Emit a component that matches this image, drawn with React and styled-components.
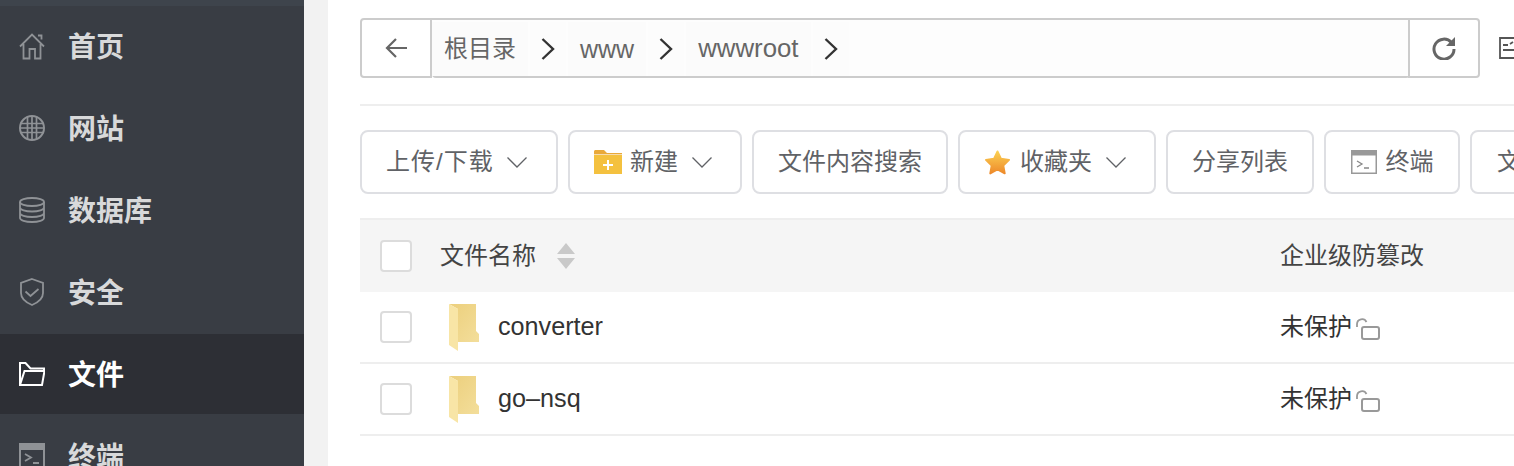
import React from "react";
import styled, { createGlobalStyle } from "styled-components";

const Global = createGlobalStyle`
  html, body { margin: 0; padding: 0; background: #fff; }
  body { font-family: "Liberation Sans", "Noto Sans CJK SC", sans-serif; }
  * { box-sizing: border-box; }
`;
const Page = styled.div`display: flex; width: 1514px; height: 466px; overflow: hidden; background: #fff;`;
const Sidebar = styled.nav`
  flex: 0 0 304px; background: #393d44; padding-top: 6px;
  display: flex; flex-direction: column; gap: 2px; overflow: hidden;
  box-shadow: inset 0 6px 0 #3e444c;
`;
const NavItem = styled.div`
  flex: 0 0 80px; display: flex; align-items: center; padding-left: 19px; gap: 23px;
  background: ${p => (p.$active ? "#2d2f35" : "transparent")};
  color: ${p => (p.$active ? "#fff" : "#d8d9da")};
  font-size: 28px; font-weight: 700;
  font-family: "Noto Sans CJK SC", sans-serif; line-height: 40px;
  & > svg { flex: 0 0 26px; }
  & > span { position: relative; top: -1px; }
`;
const Gutter = styled.div`flex: 0 0 24px; background: #f2f2f2;`;
const Main = styled.main`flex: 0 0 1186px; padding: 18px 0 0 32px; overflow: hidden;`;
const PathRow = styled.div`display: flex; align-items: center; width: 1200px; height: 60px;`;
const PathBox = styled.div`display: flex; flex: 0 0 1120px; height: 60px;`;
const SquareBtn = styled.div`
  flex: 0 0 72px; display: flex; align-items: center; justify-content: center;
  border: 2px solid #ccc; background: #fff;
  border-radius: ${p => (p.$left ? "4px 0 0 4px" : "0 4px 4px 0")};
  ${p => (p.$left ? "" : "margin-left: -2px;")}
`;
const Crumbs = styled.div`
  flex: 1; display: flex; align-items: stretch; height: 60px; background: #fdfdfd;
  border-top: 2px solid #ccc; border-bottom: 2px solid #ccc; border-radius: 0 0 4px 4px;
  padding: 2px 0 0; color: #666; font-size: 24px; line-height: 1;
`;
const Crumb = styled.span`
  display: flex; align-items: center; padding: 0 12px; background: #fbfbfb;
  font-size: ${p => p.$size || 24}px; margin-right: 2px;
`;
const Sep = styled.span`
  display: flex; align-items: center; justify-content: center; width: 36px; background: #fcfcfc; margin-right: 2px;
`;
const SideIcon = styled.span`display: inline-flex; margin-left: 19px; flex: 0 0 auto;`;
const Divider = styled.div`height: 2px; background: #eee; margin-top: 26px; width: 1200px;`;
const Toolbar = styled.div`display: flex; gap: 10px; margin-top: 24px; width: 1300px;`;
const ToolBtn = styled.div`
  flex: 0 0 ${p => p.$w}px; height: 64px; display: flex; align-items: center; justify-content: ${p => (p.$pad ? "flex-start" : "center")};
  padding-left: ${p => p.$pad || 0}px; line-height: 1;
  border: 2px solid #dedfe3; border-radius: 8px; background: #fff; color: #606266; font-size: 24px; white-space: nowrap;
`;
const BtnLabel = styled.span`
  margin: 0 ${p => p.$after ?? 0}px 0 ${p => p.$before ?? 0}px;
  letter-spacing: ${p => p.$ls || 0}px;
`;
const Table = styled.div`margin-top: 24px; width: 1300px;`;
const HeadRow = styled.div`
  display: grid; grid-template-columns: 80px 840px 1fr; align-items: center; height: 74px; line-height: 1;
  background: #f5f5f5; border-top: 2px solid #eee; color: #444; font-size: 24px;
`;
const Row = styled.div`
  display: grid; grid-template-columns: 80px 840px 1fr; align-items: center; height: 72px; line-height: 1;
  border-bottom: 2px solid #eee; color: #333; font-size: 24px; background: #fff;
`;
const Check = styled.span`
  display: block; width: 32px; height: 32px; margin-left: 20px; border: 2px solid #dcdcdc; border-radius: 4px; background: #fff;
`;
const NameHead = styled.div`display: flex; align-items: center; gap: 21px;`;
const NameCell = styled.div`display: flex; align-items: center; gap: 18px; padding-left: 8px;`;
const FileName = styled.span`font-size: 25.2px;`;
const Sort = styled.span`display: inline-flex;`;
const StatusCell = styled.div`display: flex; align-items: center; gap: 4px;`;
const LockWrap = styled.span`display: inline-flex; margin-top: 4px;`;

const stroke = { fill: "none", stroke: "#8f9296", strokeWidth: 1.8 };

const HomeIcon = () => (
  <svg width="26" height="28" viewBox="0 0 26 28"><path {...stroke} d="M1 14.500 13 2.500l12 12M4.500 12v14.500h6V17h5.500v9.500h5.500V12M19 3.500h3.500v4" /></svg>
);
const GlobeIcon = () => (
  <svg width="26" height="26" viewBox="0 0 26 26"><g {...stroke}><circle cx="13" cy="13" r="12" strokeWidth="2" /><path d="M1 8.500h24M1 13h24M1 17.500h24M8.500 1.500v23M13 1v24M17.500 1.500v23" strokeWidth="1.700" /></g></svg>
);
const DbIcon = () => (
  <svg width="26" height="26" viewBox="0 0 26 26"><g {...stroke}><ellipse cx="13" cy="5" rx="12" ry="4" /><path d="M1 5v16c0 2.200 5.400 4 12 4s12-1.800 12-4V5M1 10.500c0 2.200 5.400 4 12 4s12-1.800 12-4M1 16c0 2.200 5.400 4 12 4s12-1.800 12-4" /></g></svg>
);
const ShieldIcon = () => (
  <svg width="26" height="28" viewBox="0 0 26 28"><g {...stroke}><path d="M13 1 24 5v10c0 6-5 9.500-11 12C7 24.500 2 21 2 15V5Z" /><path d="M6.500 13.500l5 4.500L19.500 11" /></g></svg>
);
const FolderOpen = () => (
  <svg width="26" height="24" viewBox="0 0 26 24"><path fill="none" stroke="#fff" strokeWidth="2" d="M1 23V1h5.500l5 5.500H25v3M1 23h22l2.500-14H5.500L1 23Z" /></svg>
);
const TermSide = () => (
  <svg width="26" height="26" viewBox="0 0 26 26"><rect x="1" y="1" width="24" height="24" fill="none" stroke="#8f9296" strokeWidth="2" /><rect x="1" y="1" width="24" height="6" fill="#8f9296" /><path fill="none" stroke="#8f9296" strokeWidth="1.800" d="M6 11l6 3.500L6 18M14 20h6" /></svg>
);
const Chevron = () => (
  <svg width="14" height="24" viewBox="0 0 14 24"><path fill="none" stroke="#333" strokeWidth="2.400" d="M1.500 2 12 12 1.500 22" /></svg>
);
const Down = () => (
  <svg width="20" height="11" viewBox="0 0 20 11"><path fill="none" stroke="#606266" strokeWidth="1.300" d="M.5.500l9.500 9.500L19.500.500" /></svg>
);
const ArrowLeft = () => (
  <svg width="22" height="20" viewBox="0 0 22 20"><path fill="none" stroke="#666" strokeWidth="2.200" d="M22 10H2M11 1l-9 9 9 9" /></svg>
);
const Refresh = () => (
  <svg width="24" height="24" viewBox="0 0 24 24"><path fill="none" stroke="#666" strokeWidth="3" d="M19.500 6.500A10 10 0 1 0 22 13" /><path fill="#666" d="M23 1v9h-9Z" /></svg>
);
const SideGlyph = () => (
  <svg width="15" height="22" viewBox="0 0 15 22"><path fill="none" stroke="#555" strokeWidth="1.800" d="M15 1H1v20h14M4 8h5M4 13h11M11 7l3-2" /></svg>
);
const NewFolder = () => (
  <svg width="28" height="24" viewBox="0 0 28 24"><path fill="#e9a93a" d="M0 1.500C0 .700.700 0 1.500 0H10l3 3h15v3H0Z" /><rect y="5" width="28" height="19" fill="#f4c13f" /><path fill="#fff" fillOpacity=".6" d="M0 4h28v1H0Z" /><path stroke="#fff" strokeWidth="2" d="M14 10v10M9 15h10" /></svg>
);
const Star = () => (
  <svg width="27" height="26" viewBox="0 0 28 26"><defs><linearGradient id="st" x1="0" y1="0" x2="0" y2="1"><stop offset="0" stopColor="#fbd052" /><stop offset="1" stopColor="#ee8a2b" /></linearGradient></defs><path fill="url(#st)" stroke="url(#st)" strokeWidth="2" strokeLinejoin="round" d="M14 2l3.700 7.700 8.300 1.100-6 5.800 1.500 8.200L14 20.800 6.500 24.800 8 16.600l-6-5.800 8.300-1.100Z" /></svg>
);
const TermBtn = () => (
  <svg width="26" height="24" viewBox="0 0 26 24"><rect x=".75" y=".75" width="24.500" height="22.500" fill="#fff" stroke="#999" strokeWidth="1.500" /><rect x="1" y="1" width="24" height="4.500" fill="#999" /><path fill="none" stroke="#888" strokeWidth="1.300" d="M6 11l5 3-5 3M13 18h5" /></svg>
);
const SortIcon = () => (
  <svg width="18" height="26" viewBox="0 0 18 26"><path fill="#c9c9c9" d="M9 0l9 11H0ZM0 15h18L9 26Z" /></svg>
);
const FileFolder = () => (
  <svg width="32" height="48" viewBox="0 0 32 48"><defs><linearGradient id="fb" x1="0" y1="0" x2="1" y2="1"><stop offset="0" stopColor="#eccf7c" /><stop offset="1" stopColor="#f3de9b" /></linearGradient></defs><path fill="url(#fb)" d="M1 1h27v27l3 3v8H10V6Z" /><path fill="#f8e5a6" d="M1 1l9 5v42l-9-6Z" /></svg>
);
const OpenLock = () => (
  <svg width="24" height="22" viewBox="0 0 24 22"><path fill="none" stroke="#999" strokeWidth="1.800" d="M1 9V6a5 5 0 0 1 9.500-2" /><rect x="6" y="9" width="17" height="12" rx="2" fill="none" stroke="#999" strokeWidth="2" /></svg>
);

const navs = [
  { label: "首页", icon: <HomeIcon /> },
  { label: "网站", icon: <GlobeIcon /> },
  { label: "数据库", icon: <DbIcon /> },
  { label: "安全", icon: <ShieldIcon /> },
  { label: "文件", icon: <FolderOpen />, active: true },
  { label: "终端", icon: <TermSide /> },
];
const files = ["converter", "go–nsq"];

export default function App() {
  return (
    <>
      <Global />
      <Page>
        <Sidebar>
          {navs.map(n => (
            <NavItem key={n.label} $active={n.active}>{n.icon}<span>{n.label}</span></NavItem>
          ))}
        </Sidebar>
        <Gutter />
        <Main>
          <PathRow>
            <PathBox>
              <SquareBtn $left><ArrowLeft /></SquareBtn>
              <Crumbs>
                <Crumb>根目录</Crumb><Sep><Chevron /></Sep>
                <Crumb $size={25}>www</Crumb><Sep><Chevron /></Sep>
                <Crumb $size={25.8}>wwwroot</Crumb><Sep><Chevron /></Sep>
              </Crumbs>
              <SquareBtn><Refresh /></SquareBtn>
            </PathBox>
            <SideIcon><SideGlyph /></SideIcon>
          </PathRow>
          <Divider />
          <Toolbar>
            <ToolBtn $w={198} $pad={24}><BtnLabel $ls={1} $after={13}>上传/下载</BtnLabel><Down /></ToolBtn>
            <ToolBtn $w={174} $pad={24}><NewFolder /><BtnLabel $before={8} $after={14}>新建</BtnLabel><Down /></ToolBtn>
            <ToolBtn $w={196}>文件内容搜索</ToolBtn>
            <ToolBtn $w={198} $pad={24}><Star /><BtnLabel $before={9} $after={14}>收藏夹</BtnLabel><Down /></ToolBtn>
            <ToolBtn $w={148}>分享列表</ToolBtn>
            <ToolBtn $w={136}><TermBtn /><BtnLabel $before={9}>终端</BtnLabel></ToolBtn>
            <ToolBtn $w={180} $pad={25}>文件同步</ToolBtn>
          </Toolbar>
          <Table>
            <HeadRow>
              <Check />
              <NameHead>文件名称<Sort><SortIcon /></Sort></NameHead>
              <div>企业级防篡改</div>
            </HeadRow>
            {files.map(f => (
              <Row key={f}>
                <Check />
                <NameCell><FileFolder /><FileName>{f}</FileName></NameCell>
                <StatusCell>未保护<LockWrap><OpenLock /></LockWrap></StatusCell>
              </Row>
            ))}
          </Table>
        </Main>
      </Page>
    </>
  );
}
